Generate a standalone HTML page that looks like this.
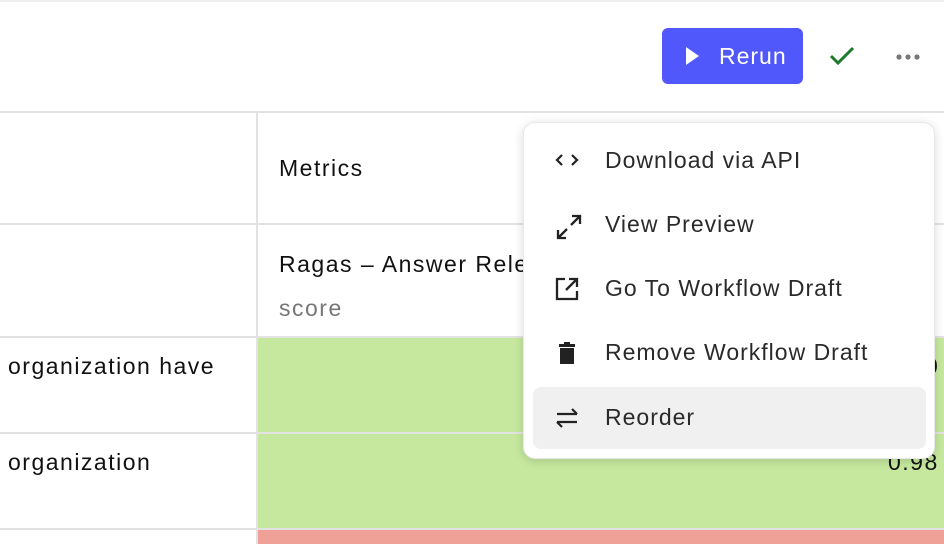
<!DOCTYPE html>
<html><head><style>
*{margin:0;padding:0;box-sizing:border-box}
body{width:944px;height:544px;overflow:hidden;background:#fff;font-family:"Liberation Sans",sans-serif;position:relative;color:#111}
.abs{position:absolute}
.hl{position:absolute;left:0;width:944px;height:2px;background:#e2e2e2}
.t{position:absolute;font-size:23px;white-space:nowrap;letter-spacing:1.5px}
.menu{position:absolute;left:523px;top:122px;width:412px;height:337px;background:#fff;border-radius:12px;box-shadow:0 2px 10px rgba(0,0,0,.15);border:1px solid #e8e8e8}
.item{position:absolute;left:0;width:100%;height:62px;font-size:23px;color:#2a2a2a}
.item span{position:absolute;left:81px;top:17px;white-space:nowrap;letter-spacing:1px}
.item svg{position:absolute;left:30px;top:18px}
</style></head><body>
<div class="hl" style="top:0;height:2px;background:#eee"></div>
<div class="abs" style="left:662px;top:28px;width:141px;height:56px;background:#5057fb;border-radius:6px;color:#fff;font-size:23px;letter-spacing:1px">
<svg class="abs" style="left:22px;top:18px" width="16" height="20" viewBox="0 0 16 20"><path d="M2 1 L15 10 L2 19Z" fill="#fff"/></svg>
<span class="abs" style="left:57px;top:15px">Rerun</span></div>
<svg class="abs" style="left:828px;top:45px" width="28" height="22" viewBox="0 0 28 22"><path d="M3 11 L10 18 L25 3" stroke="#1b7a2b" stroke-width="3" fill="none"/></svg>
<svg class="abs" style="left:896px;top:53px" width="24" height="8"><circle cx="3" cy="4" r="2.6" fill="#777"/><circle cx="12" cy="4" r="2.6" fill="#777"/><circle cx="21" cy="4" r="2.6" fill="#777"/></svg>
<div class="hl" style="top:111px"></div>
<div class="hl" style="top:223px"></div>
<div class="hl" style="top:336px"></div>
<div class="hl" style="top:432px"></div>
<div class="hl" style="top:528px"></div>
<div class="abs" style="left:256px;top:112px;width:2px;height:432px;background:#e2e2e2"></div>
<div class="abs" style="left:258px;top:338px;width:686px;height:94px;background:#c6e89e"></div>
<div class="abs" style="left:258px;top:434px;width:686px;height:94px;background:#c6e89e"></div>
<div class="abs" style="left:258px;top:530px;width:686px;height:14px;background:#f0a197"></div>
<div class="t" style="left:279px;top:155px">Metrics</div>
<div class="t" style="left:279px;top:251px">Ragas – Answer Relevance</div>
<div class="t" style="left:279px;top:295px;color:#777">score</div>
<div class="t" style="left:8px;top:353px">organization have</div>
<div class="t" style="left:8px;top:449px">organization</div>
<div class="t" style="left:888px;top:449px">0.98</div>
<div class="t" style="left:925px;top:353px">0</div>
<div class="menu">
<div class="item" style="top:7px"><svg width="26" height="24" viewBox="0 0 26 24"><path d="M8 7 L3 12 L8 17 M18 7 L23 12 L18 17" stroke="#222" stroke-width="2.2" fill="none"/></svg><span>Download via API</span></div>
<div class="item" style="top:71px"><svg width="30" height="30" viewBox="0 0 30 30"><path d="M18 4 H26 V12 M26 4 L17 13 M4 18 V26 H12 M4 26 L13 17" stroke="#222" stroke-width="2.3" fill="none"/></svg><span>View Preview</span></div>
<div class="item" style="top:135px"><svg width="26" height="26" viewBox="0 0 26 26"><path d="M11 3 H3 V23 H23 V15 M15 3 H23 V11 M23 3 L12 14" stroke="#222" stroke-width="2.3" fill="none"/></svg><span>Go To Workflow Draft</span></div>
<div class="item" style="top:199px"><svg width="26" height="26" viewBox="0 0 26 26"><path d="M10 2 H16 V4 H21 V7 H5 V4 H10Z M6 8 H20 V24 H6Z" fill="#222"/></svg><span>Remove Workflow Draft</span></div>
<div class="item" style="top:264px;left:9px;width:393px;background:#f0f0f0;border-radius:8px"><svg style="left:21px" width="26" height="26" viewBox="0 0 26 26"><path d="M3 9 H23 M18 4 L23 9 M23 17 H3 M8 22 L3 17" stroke="#222" stroke-width="2.2" fill="none"/></svg><span style="left:72px">Reorder</span></div>
</div>
</body></html>
